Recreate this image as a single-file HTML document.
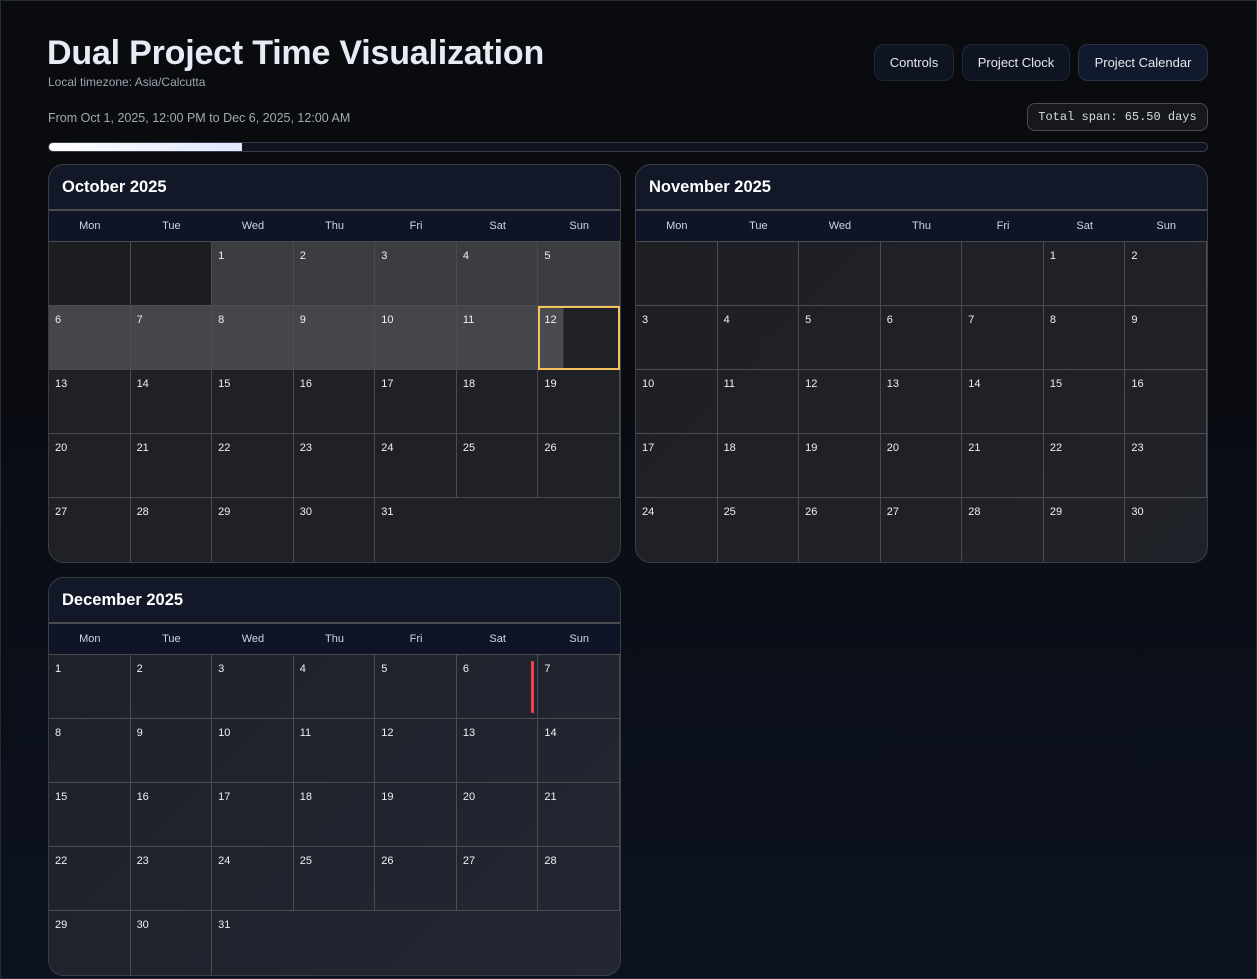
<!DOCTYPE html>
<html><head><meta charset="utf-8"><style>
*{box-sizing:border-box;margin:0;padding:0}
html,body{width:1257px;height:979px;overflow:hidden}
body{background:linear-gradient(180deg,#0a0b0e 0%,#0a0c12 40%,#0b1220 100%);font-family:"Liberation Sans",sans-serif;color:#e5e7eb;position:relative;box-shadow:inset 0 0 0 1px #2a2c33}
h1{position:absolute;left:47px;top:34px;font-size:34px;font-weight:700;color:#e6ebf5;letter-spacing:-0.2px}
.tz{position:absolute;left:48px;top:75px;font-size:12px;color:#9ca3af}
.from{position:absolute;left:48px;top:111px;font-size:12.5px;color:#a3a8b3}
.btn{position:absolute;top:44px;height:37px;border:1px solid #1f2735;border-radius:10px;background:#0e1422;color:#e5e7eb;font-size:13px;display:flex;align-items:center;justify-content:center}
.span{position:absolute;left:1027px;top:103px;width:181px;height:28px;border:1px solid #4a4d55;border-radius:8px;background:#16181d;font-family:"Liberation Mono",monospace;font-size:12px;color:#d7dbe2;display:flex;align-items:center;justify-content:center}
.bar{position:absolute;left:48px;top:142px;width:1160px;height:10px;border:1px solid #3a3e48;border-radius:6px;background:#0f1420;overflow:hidden}
.bar i{display:block;width:193px;height:100%;background:linear-gradient(90deg,#fff,#dfe6ff)}
.card{position:absolute;width:573px;height:399px;border:1px solid #3b3e45;border-radius:16px;overflow:hidden;background:#1f2126}
.hd{height:46px;background:#121828;border-bottom:2px solid #4a4c52;padding:13px 13px;font-size:16.5px;font-weight:700;color:#fff}
.wk{display:grid;grid-template-columns:repeat(7,1fr);height:31px;background:#0f1526;border-bottom:1px solid #4a4c52;font-size:11px;color:#d1d5db;align-items:center;text-align:center}
.g{display:grid;grid-template-columns:repeat(7,1fr);grid-auto-rows:64px}
.g div{border-right:1px solid #4b4d53;border-bottom:1px solid #4b4d53;font-size:11px;color:#f0f0f0;padding:8px 0 0 6px;position:relative}
.g div.e{background:#1c1d21}
.g div.f1{background:#3c3d41}
.g div.f2{background:#45464a}
.g div.c{background:linear-gradient(90deg,#4a4b4f 0 30%,#202126 30%);border:2px solid #f7c15c;padding:6px 0 0 4px}
.g div.nb{border-bottom:none}
.g div.nr{border-right:none}
.dec{background:linear-gradient(135deg,#1e2027,#222733)}
.nov{background:linear-gradient(135deg,#1f2024,#202229)}
</style></head><body>
<h1>Dual Project Time Visualization</h1>
<div class="tz">Local timezone: Asia/Calcutta</div>
<div class="from">From Oct 1, 2025, 12:00 PM to Dec 6, 2025, 12:00 AM</div>
<div class="btn" style="left:874px;width:80px">Controls</div>
<div class="btn" style="left:962px;width:108px">Project Clock</div>
<div class="btn" style="left:1078px;width:130px;border-color:#2a3446;background:#111a2c">Project Calendar</div>
<div class="span">Total span: 65.50 days</div>
<div class="bar"><i></i></div>

<div class="card" style="left:48px;top:164px">
<div class="hd">October 2025</div>
<div class="wk"><span>Mon</span><span>Tue</span><span>Wed</span><span>Thu</span><span>Fri</span><span>Sat</span><span>Sun</span></div>
<div class="g">
<div class="e"></div><div class="e"></div><div class="f1">1</div><div class="f1">2</div><div class="f1">3</div><div class="f1">4</div><div class="f1">5</div>
<div class="f2">6</div><div class="f2">7</div><div class="f2">8</div><div class="f2">9</div><div class="f2">10</div><div class="f2">11</div><div class="c">12</div>
<div>13</div><div>14</div><div>15</div><div>16</div><div>17</div><div>18</div><div>19</div>
<div>20</div><div>21</div><div>22</div><div>23</div><div>24</div><div>25</div><div>26</div>
<div class="nb">27</div><div class="nb">28</div><div class="nb">29</div><div class="nb">30</div><div class="nb nr">31</div>
</div></div>

<div class="card nov" style="left:635px;top:164px">
<div class="hd">November 2025</div>
<div class="wk"><span>Mon</span><span>Tue</span><span>Wed</span><span>Thu</span><span>Fri</span><span>Sat</span><span>Sun</span></div>
<div class="g">
<div></div><div></div><div></div><div></div><div></div><div>1</div><div>2</div>
<div>3</div><div>4</div><div>5</div><div>6</div><div>7</div><div>8</div><div>9</div>
<div>10</div><div>11</div><div>12</div><div>13</div><div>14</div><div>15</div><div>16</div>
<div>17</div><div>18</div><div>19</div><div>20</div><div>21</div><div>22</div><div>23</div>
<div class="nb">24</div><div class="nb">25</div><div class="nb">26</div><div class="nb">27</div><div class="nb">28</div><div class="nb">29</div><div class="nb nr">30</div>
</div></div>

<div class="card dec" style="left:48px;top:577px">
<div class="hd">December 2025</div>
<div class="wk"><span>Mon</span><span>Tue</span><span>Wed</span><span>Thu</span><span>Fri</span><span>Sat</span><span>Sun</span></div>
<div class="g">
<div>1</div><div>2</div><div>3</div><div>4</div><div>5</div><div>6<span style="position:absolute;left:74px;top:6px;width:3px;height:52px;background:#ef4444;border-radius:1px"></span></div><div>7</div>
<div>8</div><div>9</div><div>10</div><div>11</div><div>12</div><div>13</div><div>14</div>
<div>15</div><div>16</div><div>17</div><div>18</div><div>19</div><div>20</div><div>21</div>
<div>22</div><div>23</div><div>24</div><div>25</div><div>26</div><div>27</div><div>28</div>
<div class="nb">29</div><div class="nb">30</div><div class="nb nr">31</div>
</div></div>
</body></html>
